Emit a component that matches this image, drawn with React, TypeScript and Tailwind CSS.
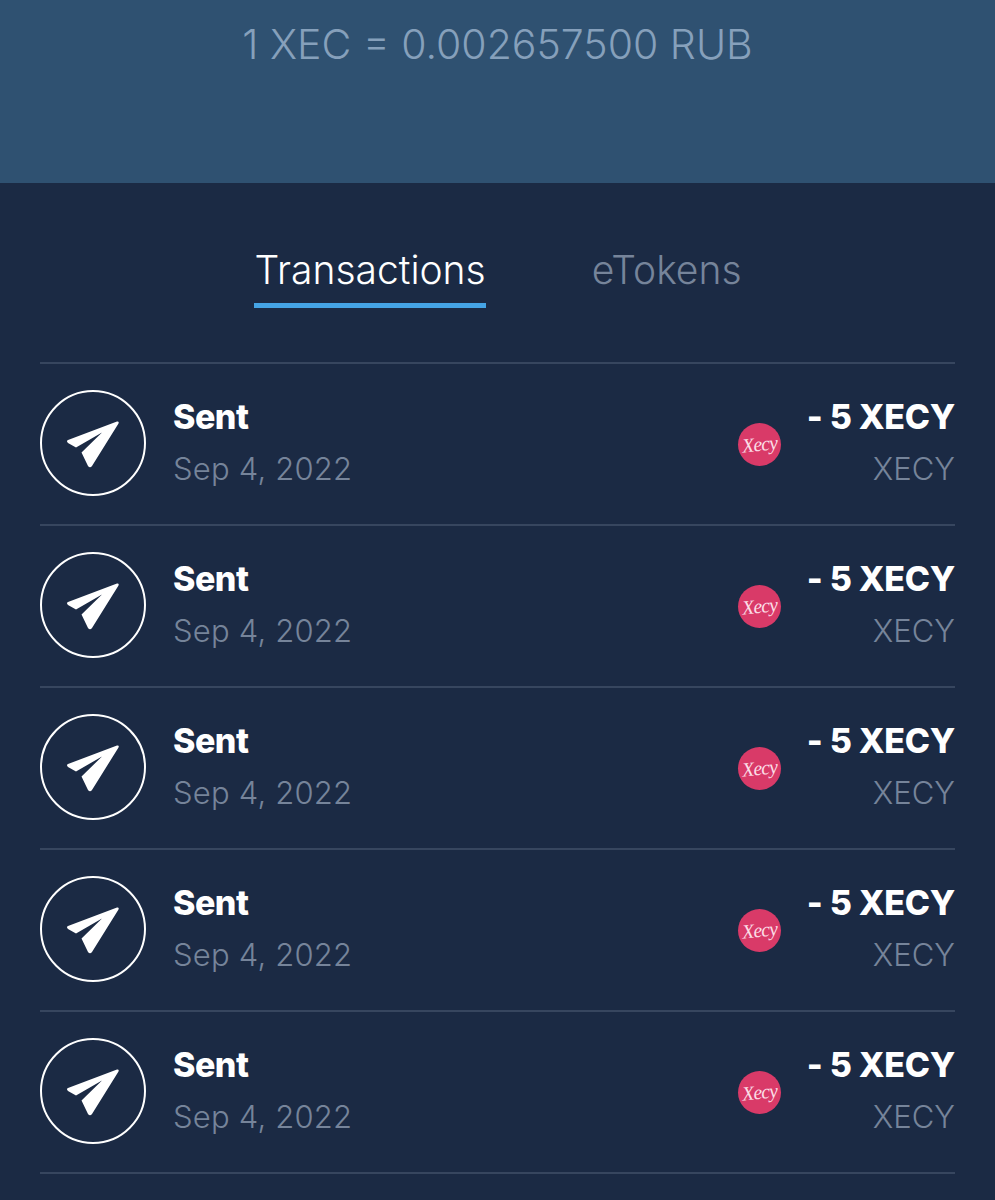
const rows = [0, 1, 2, 3, 4];

function SentIcon() {
  return (
    <div className="flex h-[106px] w-[106px] shrink-0 items-center justify-center rounded-full border-[2.5px] border-white">
      <svg width="56" height="50" viewBox="0 0 56 50" className="mt-[1px]">
        <path
          d="M3 21 L52 2.5 Q54.5 2 53.5 4.5 L27 47 Q25 49.5 23 47 L16.5 33.5 L37 13.5 L11 28.5 L3 24 Q1 22 3 21 Z"
          fill="#fff"
        />
      </svg>
    </div>
  );
}

function XecyLogo() {
  return (
    <div className="flex h-[43px] w-[43px] items-center justify-center overflow-hidden rounded-full bg-[#d93a68]">
      <span className="-rotate-6 font-['Liberation_Serif',serif] text-[20px] italic leading-none tracking-[-1px] text-[#fbdde6]">
        Xecy
      </span>
    </div>
  );
}

function Row() {
  return (
    <div className="flex h-[162px] items-center border-t-2 border-[#37465f] pb-[2px]">
      <SentIcon />
      <div className="ml-[27px] flex-1">
        <div className="text-[34px] font-extrabold leading-[48px] tracking-[-0.5px] text-white">Sent</div>
        <div className="mt-[4px] text-[31px] font-light leading-[48px] tracking-[0.2px] text-[#76849a]">Sep 4, 2022</div>
      </div>
      <div className="mr-[26px] mt-[2px]">
        <XecyLogo />
      </div>
      <div className="text-right">
        <div className="text-[34px] font-extrabold leading-[48px] tracking-[-0.3px] text-white">- 5 XECY</div>
        <div className="mt-[4px] text-[31px] font-light leading-[48px] text-[#76849a]">XECY</div>
      </div>
    </div>
  );
}

export default function App() {
  return (
    <div className="h-[1200px] w-[995px] overflow-hidden bg-[#1b2a44] font-['Inter',sans-serif]">
      <header className="flex h-[183px] justify-center bg-[#2f5171] pt-[17px]">
        <div className="text-[41px] font-light leading-[54px] text-[#86a0bb]">1 XEC = 0.002657500 RUB</div>
      </header>

      <nav className="flex h-[125px] items-start justify-center gap-[106px] pl-[1px] pt-[60px]">
        <div className="border-b-[5px] border-[#45a4e5] pb-[6px] text-[39px] font-light leading-[54px] text-white">
          Transactions
        </div>
        <div className="text-[39px] font-light leading-[54px] text-[#76849a]">eTokens</div>
      </nav>

      <main className="mx-[40px] mt-[54px]">
        {rows.map((r) => (
          <Row key={r} />
        ))}
        <div className="border-t-2 border-[#37465f]" />
      </main>
    </div>
  );
}
